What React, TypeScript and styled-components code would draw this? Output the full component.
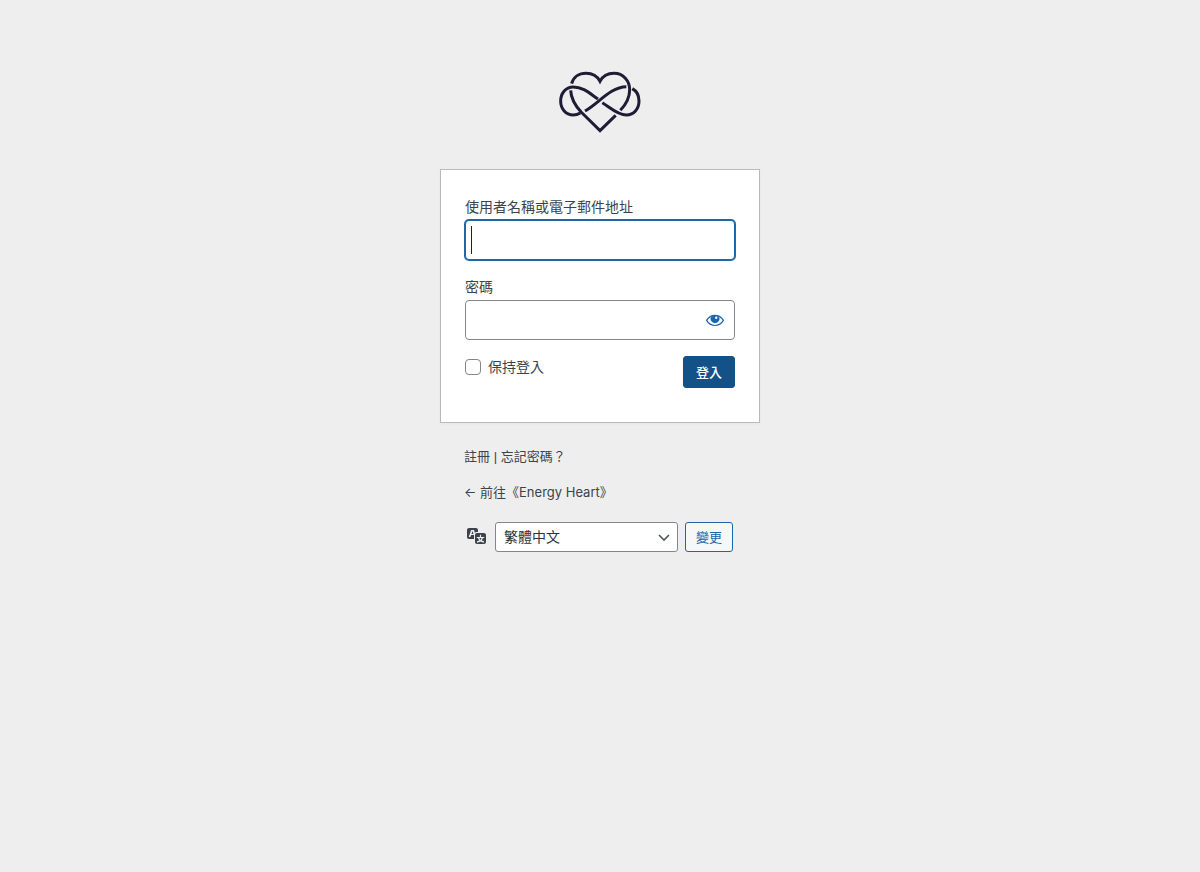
import React from "react";
import styled, { createGlobalStyle } from "styled-components";

const GlobalStyle = createGlobalStyle`
  *, *::before, *::after { box-sizing: border-box; }
  body {
    margin: 0;
    background: #eeeeee;
    color: #3c434a;
    font-family: Inter, "Noto Sans CJK TC", sans-serif;
    font-size: 13px;
    line-height: 19px;
  }
  button, input, select { font-family: inherit; margin: 0; }
`;

const Page = styled.main`
  width: 100%;
  max-width: 320px;
  margin: 0 auto;
  padding: 60px 0 24px;
`;

const Brand = styled.h1`
  display: flex;
  justify-content: center;
  margin: 0 0 25px;
  height: 84px;
`;

const BrandLink = styled.a`
  display: block;
  height: 80px;
`;

const Card = styled.form`
  padding: 26px 24px 34px;
  background: #ffffff;
  border: 1px solid #b9babd;
  box-shadow: 0 1px 3px rgba(0, 0, 0, 0.04);
`;

const Field = styled.div`
  display: flex;
  flex-direction: column;
  gap: 3px;
  margin-bottom: 16px;
`;

const Label = styled.label`
  font-size: 14px;
  line-height: 21px;
`;

const InputWrap = styled.div`
  position: relative;
`;

const TextInput = styled.input<{ $active?: boolean }>`
  display: block;
  width: 100%;
  height: 40px;
  padding: 0 6px;
  font-size: 24px;
  color: #2c3338;
  background: #ffffff;
  border: 1px solid ${(p) => (p.$active ? "#1d66a8" : "#83868b")};
  border-radius: 4px;
  box-shadow: ${(p) => (p.$active ? "0 0 0 1px #1d66a8" : "none")};
  caret-color: ${(p) => (p.$active ? "transparent" : "auto")};
  outline: none;
`;

const Caret = styled.span`
  position: absolute;
  left: 6px;
  top: 6px;
  width: 1px;
  height: 28px;
  background: #1d2327;
`;

const RevealButton = styled.button`
  position: absolute;
  right: 0;
  top: 0;
  display: flex;
  align-items: center;
  justify-content: center;
  width: 40px;
  height: 40px;
  padding: 0;
  color: #1d66a8;
  background: transparent;
  border: 0;
`;

const Actions = styled.div`
  display: flex;
  align-items: flex-start;
  justify-content: space-between;
`;

const Remember = styled.div`
  display: flex;
  align-items: center;
  gap: 7px;
  height: 21px;
`;

const Checkbox = styled.input`
  appearance: none;
  width: 16px;
  height: 16px;
  background: #ffffff;
  border: 1px solid #83868b;
  border-radius: 4px;
`;

const Button = styled.button<{ $primary?: boolean }>`
  height: ${(p) => (p.$primary ? 32 : 30)}px;
  padding: 0 ${(p) => (p.$primary ? 12 : 10)}px;
  font-size: 13px;
  font-weight: ${(p) => (p.$primary ? 500 : 400)};
  line-height: 19px;
  color: ${(p) => (p.$primary ? "#ffffff" : "#1d66a8")};
  background: ${(p) => (p.$primary ? "#135289" : "#f6f7f7")};
  border: 1px solid ${(p) => (p.$primary ? "#135289" : "#1d66a8")};
  border-radius: 3px;
`;

const Footer = styled.div`
  display: flex;
  flex-direction: column;
  gap: 16px;
  padding: 24px 24px 0;
`;

const FooterLine = styled.p`
  margin: 0;
  height: 20px;
`;

const Separator = styled.span`
  font-family: "Liberation Sans", sans-serif;
`;

const TextLink = styled.a`
  color: inherit;
  text-decoration: none;
`;

const Language = styled.form`
  display: flex;
  align-items: center;
  gap: 7px;
  padding: 19px 27px 0;
`;

const LanguageLabel = styled.label`
  display: flex;
  width: 21px;
  height: 22px;
`;

const SelectWrap = styled.div`
  position: relative;
  flex: 1;
`;

const Select = styled.select`
  appearance: none;
  display: block;
  width: 100%;
  height: 30px;
  padding: 0 24px 0 8px;
  font-size: 14px;
  line-height: 28px;
  color: #2c3338;
  background: #ffffff;
  border: 1px solid #83868b;
  border-radius: 3px;
`;

const Chevron = styled.svg`
  position: absolute;
  right: 7px;
  top: 8px;
  pointer-events: none;
`;

const Logo = () => (
  <svg width="100" height="80" viewBox="0 -1 300 240" fill="none" stroke="#211c35" strokeWidth="9" aria-hidden="true">
    <path d="M65 70C70 50 87 39 108 39C128 39 142 48 150 63C158 48 172 39 192 39C220 39 239 62 239 88C239 112 228 132 211 150" />
    <path d="M197 165L150 211L94 156C76 136 63 116 62 90" />
    <path d="M91 158C84 162 77 164 70 164C46 164 32 144 32 122C32 100 46 80 70 80C100 80 120 100 144 116" />
    <path d="M157 127C181 142 204 164 229 164C253 164 267 144 267 122C267 105 260 92 247 85" />
    <path d="M105 152C145 130 181 80 229 79" />
  </svg>
);

const EyeIcon = () => (
  <svg width="20" height="20" viewBox="0 0 20 20" fill="none" aria-hidden="true">
    <path d="M1.6 10.4C5.6 3.6 14.4 3.6 18.4 10.4C14.4 17.2 5.6 17.2 1.6 10.4Z" stroke="currentColor" strokeWidth="1.2" />
    <path d="M6 6.6Q10 4.8 14 6.6A4.5 4.5 0 1 1 6 6.6Z" fill="currentColor" />
    <circle cx="11.2" cy="7.8" r="1.2" fill="#ffffff" />
  </svg>
);

const TranslateIcon = () => (
  <svg width="20" height="20" viewBox="0 1 20 20" fill="#3c434a" aria-hidden="true">
    <path d="M11 7H9.49c-.63 0-1.25.3-1.59.7L7 5H4.13l-2.39 7h1.69l.74-2H7v4H2c-1.1 0-2-.9-2-2V5c0-1.1.9-2 2-2h7c1.1 0 2 .9 2 2v2zM6.51 9H4.49l1-2.93zM10 8h7c1.1 0 2 .9 2 2v7c0 1.1-.9 2-2 2h-7c-1.1 0-2-.9-2-2v-7c0-1.1.9-2 2-2zm7.25 5v-1.08h-3.17V9.75h-1.16v2.17H9.75V13h1.28c.11.85.56 1.85 1.28 2.62-.87.36-1.89.62-2.31.62-.01.02.22.97.2 1.46.84 0 2.21-.5 3.28-1.15 1.09.65 2.48 1.15 3.34 1.15-.02-.49.2-1.44.2-1.46-.43 0-1.49-.27-2.38-.63.7-.77 1.14-1.77 1.25-2.61h1.36zm-3.81 1.93c-.5-.46-.85-1.13-1.01-1.93h2.09c-.17.8-.51 1.47-1 1.93l-.04.03s-.03-.02-.04-.03z" />
  </svg>
);

export default function App() {
  return (
    <>
      <GlobalStyle />
      <Page lang="zh-TW">
        <Brand>
          <BrandLink href="#" aria-label="Energy Heart">
            <Logo />
          </BrandLink>
        </Brand>
        <Card onSubmit={(e) => e.preventDefault()}>
          <Field>
            <Label htmlFor="user">使用者名稱或電子郵件地址</Label>
            <InputWrap>
              <TextInput id="user" type="text" autoComplete="username" $active />
              <Caret />
            </InputWrap>
          </Field>
          <Field>
            <Label htmlFor="password">密碼</Label>
            <InputWrap>
              <TextInput id="password" type="password" autoComplete="current-password" />
              <RevealButton type="button" aria-label="顯示密碼">
                <EyeIcon />
              </RevealButton>
            </InputWrap>
          </Field>
          <Actions>
            <Remember>
              <Checkbox id="remember" type="checkbox" />
              <Label htmlFor="remember">保持登入</Label>
            </Remember>
            <Button type="submit" $primary>登入</Button>
          </Actions>
        </Card>
        <Footer>
          <FooterLine>
            <TextLink href="#register">註冊</TextLink>
            <Separator> | </Separator>
            <TextLink href="#lost">忘記密碼？</TextLink>
          </FooterLine>
          <FooterLine>
            <TextLink href="#home">← 前往《Energy Heart》</TextLink>
          </FooterLine>
        </Footer>
        <Language onSubmit={(e) => e.preventDefault()}>
          <LanguageLabel htmlFor="language" aria-label="語言">
            <TranslateIcon />
          </LanguageLabel>
          <SelectWrap>
            <Select id="language" defaultValue="zh">
              <option value="zh">繁體中文</option>
              <option value="en">English</option>
            </Select>
            <Chevron width="14" height="14" viewBox="0 0 14 14" fill="none" stroke="#50575e" strokeWidth="1.6" aria-hidden="true">
              <path d="M2 5L7 10L12 5" />
            </Chevron>
          </SelectWrap>
          <Button type="submit">變更</Button>
        </Language>
      </Page>
    </>
  );
}
